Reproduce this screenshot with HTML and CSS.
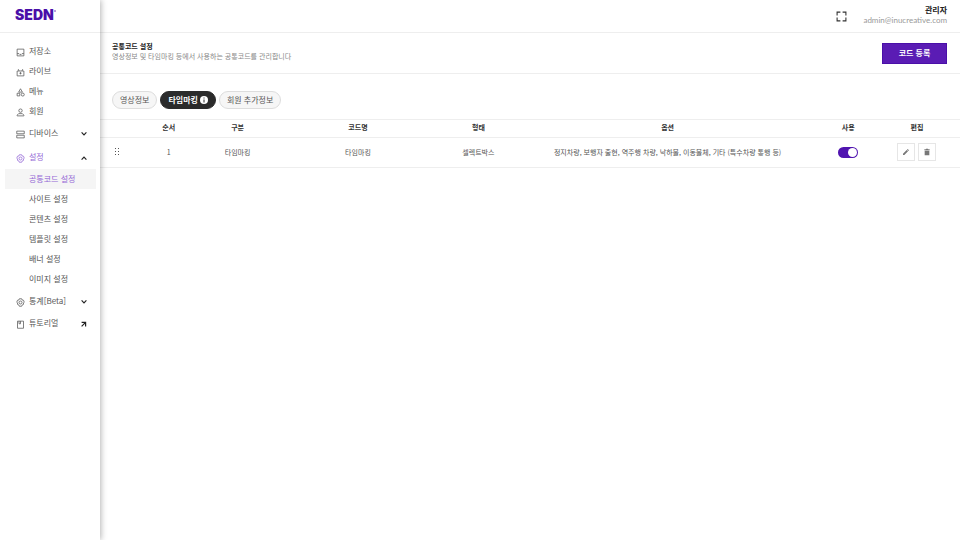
FILE: index.html
```html
<!DOCTYPE html>
<html lang="ko">
<head>
  <meta charset="UTF-8">
  <meta name="viewport" content="width=device-width, initial-scale=1.0">
  <title>SEDN - 공통코드 설정</title>
  <link rel="stylesheet" href="styles.css">
</head>
<body>
  <div class="app">
    <aside class="sidebar">
      <a href="#" class="logo">SEDN<span class="logo-mark"></span></a>
      <nav class="menu">
        <a href="#" class="menu-item">
          <svg class="icon" viewBox="0 0 24 24"><path d="M3 3h18v18H3zM3 15h5l2 2h4l2-2h5"/></svg>
          저장소
        </a>
        <a href="#" class="menu-item">
          <svg class="icon" viewBox="0 0 24 24"><path d="M3 8h18v13H3zM8 8L6 3M16 8l2-5M12 11v6M9 14h6"/></svg>
          라이브
        </a>
        <a href="#" class="menu-item">
          <svg class="icon" viewBox="0 0 24 24"><path d="M12 2l5 9H7zM3 14h7v7H3z"/><circle cx="18" cy="17.500" r="4"/></svg>
          메뉴
        </a>
        <a href="#" class="menu-item">
          <svg class="icon" viewBox="0 0 24 24"><circle cx="12" cy="7" r="4.500"/><path d="M3 21v-2l4-4h10l4 4v2z"/></svg>
          회원
        </a>
        <a href="#" class="menu-item has-sub">
          <svg class="icon" viewBox="0 0 24 24"><path d="M2 3h20v7H2zM2 14h20v7H2z"/></svg>
          디바이스
          <svg class="arrow" viewBox="0 0 10 10"><path d="M2 3l3 3 3-3"/></svg>
        </a>
        <a href="#" class="menu-item has-sub active">
          <svg class="icon" viewBox="0 0 24 24"><path d="M9 2h6l1 3 4 1 2 5-2 2v4l-4 2-1 3H9l-1-3-4-2v-4l-2-2 2-5 4-1z"/><circle cx="12" cy="12" r="4"/></svg>
          설정
          <svg class="arrow" viewBox="0 0 10 10"><path d="M2 7l3-3 3 3"/></svg>
        </a>
        <div class="submenu">
          <a href="#" class="selected">공통코드 설정</a>
          <a href="#">사이트 설정</a>
          <a href="#">콘텐츠 설정</a>
          <a href="#">템플릿 설정</a>
          <a href="#">배너 설정</a>
          <a href="#">이미지 설정</a>
        </div>
        <a href="#" class="menu-item has-sub">
          <svg class="icon" viewBox="0 0 24 24"><path d="M9 2h6l1 3 4 1 2 5-2 2v4l-4 2-1 3H9l-1-3-4-2v-4l-2-2 2-5 4-1z"/><circle cx="12" cy="12" r="4"/></svg>
          통계[Beta]
          <svg class="arrow" viewBox="0 0 10 10"><path d="M2 3l3 3 3-3"/></svg>
        </a>
        <a href="#" class="menu-item">
          <svg class="icon" viewBox="0 0 24 24"><path d="M4 3h16v19H4zM8 3v7h4V3"/></svg>
          튜토리얼
          <svg class="arrow" viewBox="0 0 10 10"><path d="M2 3h5v5M7 3L2 8"/></svg>
        </a>
      </nav>
    </aside>

    <main class="main">
      <header class="topbar">
        <button type="button" class="fullscreen" aria-label="전체화면">
          <svg viewBox="0 0 10 10"><path d="M1 4V1h3M6 1h3v3M9 6v3H6M4 9H1V6"/></svg>
        </button>
        <div class="user">
          <strong>관리자</strong>
          <span>admin@inucreative.com</span>
        </div>
      </header>

      <section class="page-head">
        <div>
          <h1>공통코드 설정</h1>
          <p>영상정보 및 타임마킹 등에서 사용하는 공통코드를 관리합니다</p>
        </div>
        <button type="button" class="btn-add">코드 등록</button>
      </section>

      <div class="tabs">
        <button type="button" class="tab">영상정보</button>
        <button type="button" class="tab on">타임마킹
          <svg viewBox="0 0 16 16"><circle cx="8" cy="8" r="8" fill="#fff"/><path d="M8 3v2M8 7v6" stroke="#2b2b2b" stroke-width="2"/></svg>
        </button>
        <button type="button" class="tab">회원 추가정보</button>
      </div>

      <table class="code-table">
        <colgroup>
          <col class="w4"><col class="w8"><col class="w8"><col class="w20">
          <col class="w8"><col class="w36"><col class="w6"><col class="w10">
        </colgroup>
        <thead>
          <tr>
            <th></th>
            <th>순서</th>
            <th>구분</th>
            <th>코드명</th>
            <th>형태</th>
            <th>옵션</th>
            <th>사용</th>
            <th>편집</th>
          </tr>
        </thead>
        <tbody>
          <tr>
            <td><svg class="drag" viewBox="0 0 6 8"><path d="M1 0h1v1H1zM4 0h1v1H4zM1 3h1v1H1zM4 3h1v1H4zM1 6h1v1H1zM4 6h1v1H4z"/></svg></td>
            <td>1</td>
            <td>타임마킹</td>
            <td>타임마킹</td>
            <td>셀렉트박스</td>
            <td>정지차량, 보행자 출현, 역주행 차량, 낙하물, 이동물체, 기타 (특수차량 통행 등)</td>
            <td><input type="checkbox" class="switch" aria-label="사용" checked></td>
            <td>
              <div class="actions">
                <button type="button" aria-label="수정"><svg viewBox="0 0 24 24"><path d="M3 17v4h4L18 10l-4-4zM15 5l4 4 2-2-4-4z"/></svg></button>
                <button type="button" aria-label="삭제"><svg viewBox="0 0 24 24"><path d="M4 4h5V2h6v2h5v3H4zM5 8h14v14H5z"/></svg></button>
              </div>
            </td>
          </tr>
        </tbody>
      </table>
    </main>
  </div>
</body>
</html>
```
FILE: styles.css
```css
* {
  margin: 0;
  padding: 0;
  box-sizing: border-box;
}
body {
  font-family: "Noto Sans CJK KR", sans-serif;
  font-size: 7px;
  line-height: 10px;
  color: #555;
  background-color: #fff;
}
a {
  color: inherit;
  text-decoration: none;
}
button {
  font-family: inherit;
  cursor: pointer;
}
svg {
  display: block;
}
.app {
  display: flex;
  min-height: 100vh;
}

/* sidebar */
.sidebar {
  flex: 0 0 100px;
  box-shadow: 1px 0 6px rgba(0, 0, 0, 0.3);
  z-index: 1;
}
.logo {
  display: flex;
  height: 33px;
  padding: 7px 0 0 15px;
  border-bottom: 1px solid #eee;
  font-family: Inter, sans-serif;
  font-size: 14px;
  font-weight: 900;
  line-height: 16px;
  color: #4a0fa8;
}
.logo-mark {
  width: 2px;
  height: 2px;
  margin-top: 3px;
  background-color: #b9a0dd;
}
.menu {
  padding-top: 8px;
  font-size: 8px;
}
.menu-item {
  display: flex;
  align-items: center;
  gap: 4px;
  height: 20px;
  padding: 0 12px 0 16px;
}
.menu-item.has-sub {
  height: 24px;
}
.menu-item.active,
.submenu .selected {
  color: #9468d6;
}
.icon {
  width: 9px;
  height: 9px;
  margin-top: 2px;
  fill: none;
  stroke: currentColor;
  stroke-width: 2;
}
.arrow {
  width: 8px;
  height: 8px;
  margin-top: 2px;
  margin-left: auto;
  fill: none;
  stroke: #222;
  stroke-width: 1.5;
}
.submenu a {
  display: flex;
  align-items: center;
  height: 20px;
  margin: 0 4px 0 5px;
  padding-left: 24px;
}
.submenu .selected {
  background-color: #f5f5f5;
}

/* header */
.main {
  flex: 1;
  min-width: 0;
}
.topbar {
  display: flex;
  justify-content: flex-end;
  align-items: center;
  gap: 16px;
  height: 33px;
  padding-right: 13px;
  border-bottom: 1px solid #eee;
}
.fullscreen {
  width: 11px;
  height: 11px;
  border: 0;
  background: none;
}
.fullscreen svg {
  fill: none;
  stroke: #333;
}
.user {
  padding-bottom: 2px;
  text-align: right;
  font-size: 8px;
}
.user strong,
.user span {
  display: block;
}
.user strong {
  color: #222;
}
.user span {
  color: #999;
  font-family: Lato, sans-serif;
}
.page-head {
  display: flex;
  justify-content: space-between;
  align-items: center;
  height: 41px;
  padding: 0 13px 0 12px;
  border-bottom: 1px solid #eee;
}
.page-head h1 {
  font-size: 7px;
  line-height: 10px;
  color: #222;
}
.page-head p {
  color: #888;
}
.page-head div {
  padding-bottom: 4px;
}
.btn-add {
  width: 65px;
  height: 21px;
  padding-bottom: 2px;
  border: 1px solid #4a0fa8;
  background-color: #5a1cb4;
  color: #fff;
  font-size: 8px;
  font-weight: 700;
}

/* tabs */
.tabs {
  display: flex;
  gap: 3px;
  padding: 17px 12px 10px;
}
.tab {
  display: flex;
  align-items: center;
  gap: 2px;
  height: 18px;
  padding: 0 7px 1px;
  border: 1px solid #ddd;
  border-radius: 9px;
  background-color: #f6f6f6;
  color: #555;
  font-size: 8px;
}
.tab.on {
  border-color: #2b2b2b;
  background-color: #2b2b2b;
  color: #fff;
  font-weight: 700;
}
.tab svg {
  width: 8px;
  height: 8px;
}

/* table */
.code-table {
  width: 100%;
  table-layout: fixed;
  border-collapse: collapse;
  text-align: center;
}
.w4 { width: 4%; }
.w6 { width: 6%; }
.w8 { width: 8%; }
.w10 { width: 10%; }
.w20 { width: 20%; }
.w36 { width: 36%; }
.code-table th {
  height: 18px;
  padding-bottom: 3px;
  border-top: 1px solid #eee;
  border-bottom: 1px solid #eee;
  color: #333;
}
.code-table td {
  height: 30px;
  padding-bottom: 1px;
  border-bottom: 1px solid #eee;
  vertical-align: middle;
}
.drag {
  width: 6px;
  height: 8px;
  margin: 0 auto;
  fill: #555;
}
.switch {
  appearance: none;
  display: block;
  width: 20px;
  height: 11px;
  margin: 0 auto;
  padding: 1px;
  border-radius: 6px;
  background-color: #bbb;
  cursor: pointer;
}
.switch::before {
  content: "";
  display: block;
  width: 9px;
  height: 9px;
  border-radius: 50%;
  background-color: #fff;
}
.switch:checked {
  background-color: #5014b0;
}
.switch:checked::before {
  margin-left: auto;
}
.actions {
  display: flex;
  justify-content: center;
  gap: 3px;
}
.actions button {
  display: flex;
  align-items: center;
  justify-content: center;
  width: 18px;
  height: 18px;
  border: 1px solid #e6e6e6;
  background-color: #fff;
}
.actions svg {
  width: 8px;
  height: 8px;
  fill: #777;
}
```
